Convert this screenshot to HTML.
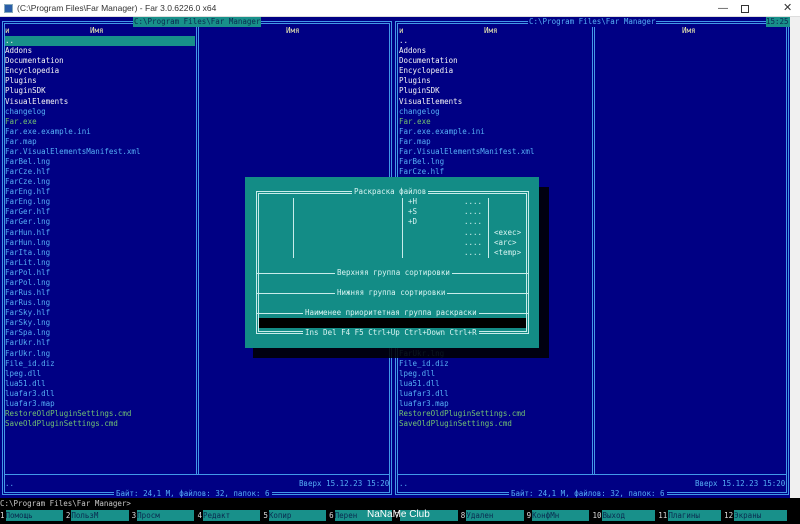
<!DOCTYPE html>
<html><head><meta charset="utf-8"><style>
*{margin:0;padding:0;box-sizing:border-box}
body{width:800px;height:524px;overflow:hidden;background:#000084;position:relative;font-family:"DejaVu Sans Mono","Liberation Mono",monospace;font-size:7.5px;}
.t{position:absolute;white-space:pre;line-height:10px;height:10px}
#tb{position:absolute;left:0;top:0;width:800px;height:17px;background:#fff;font-family:"Liberation Sans",sans-serif;font-size:8.5px;color:#333;line-height:17px;border-bottom:1px solid #ddd}
.w{color:#f4f4f4}.b{color:#55aef5}.g{color:#72c272}.h{color:#ecec b0;color:#ececb0}
</style></head><body>
<div id="tb"><span style="position:absolute;left:4px;top:4px;width:9px;height:9px;background:#2a5ea8;border:1px solid #8ab"></span><span style="position:absolute;left:17px">(C:\Program Files\Far Manager) - Far 3.0.6226.0 x64</span>
<span style="position:absolute;left:718px;font-size:10px">—</span><span style="position:absolute;left:741px;top:5px;width:8px;height:8px;border:1px solid #333"></span><span style="position:absolute;left:783px;font-size:11px">✕</span></div>

<svg width="800" height="524" style="position:absolute;left:0;top:0" shape-rendering="crispEdges">
<g stroke="#4298e8" stroke-width="1" fill="none">
<rect x="2.5" y="21.5" width="389" height="473"/><rect x="4.5" y="23.5" width="385" height="469"/>
<line x1="196.5" y1="24" x2="196.5" y2="474"/><line x1="198.5" y1="24" x2="198.5" y2="474"/>
<line x1="5" y1="474.5" x2="389" y2="474.5"/>
<rect x="395.5" y="21.5" width="393" height="473"/><rect x="397.5" y="23.5" width="389" height="469"/>
<line x1="592.5" y1="24" x2="592.5" y2="474"/><line x1="594.5" y1="24" x2="594.5" y2="474"/>
<line x1="398" y1="474.5" x2="786" y2="474.5"/>
</g>
<rect x="790" y="17" width="10" height="490" fill="#f0f0f0"/>
</svg>

<div class="t" style="left:133px;top:17px;background:#18908a;color:#0a2a50;padding:0 1px">C:\Program Files\Far Manager</div>
<div class="t b" style="left:528px;top:17px;background:#000084;padding:0 1px">C:\Program Files\Far Manager</div>
<div class="t" style="left:766px;top:17px;background:#18908a;color:#0a2a50;width:24px">15:25</div>

<div class="t h" style="left:5px;top:26px">и</div><div class="t h" style="left:90px;top:26px">Имя</div><div class="t h" style="left:286px;top:26px">Имя</div>
<div class="t h" style="left:399px;top:26px">и</div><div class="t h" style="left:484px;top:26px">Имя</div><div class="t h" style="left:682px;top:26px">Имя</div>
<div style="position:absolute;left:5px;top:36px;width:190px;height:10px;background:#18908a"></div>
<div id="files"></div>

<div class="t b" style="left:5px;top:479px">..</div><div class="t b" style="left:299px;top:479px">Вверх 15.12.23 15:20</div>
<div class="t b" style="left:399px;top:479px">..</div><div class="t b" style="left:695px;top:479px">Вверх 15.12.23 15:20</div>
<div class="t b" style="left:114px;top:489px;background:#000084;padding:0 2px">Байт: 24,1 М, файлов: 32, папок: 6</div>
<div class="t b" style="left:509px;top:489px;background:#000084;padding:0 2px">Байт: 24,1 М, файлов: 32, папок: 6</div>

<div style="position:absolute;left:0;top:498px;width:800px;height:26px;background:#000"></div>
<div class="t" style="left:0;top:499px;color:#c8c8c8">C:\Program Files\Far Manager&gt;</div>
<div id="keys" style="position:absolute;left:0;top:510px;width:790px;height:11px;display:flex"></div>
<div class="t" style="left:367px;top:509px;color:#fff;font-family:'Liberation Sans',sans-serif;font-size:10px;line-height:12px;height:12px">NaNaMe Club</div>

<div style="position:absolute;left:253px;top:187px;width:296px;height:171px;background:rgba(0,0,0,0.88)"></div>
<div style="position:absolute;left:245px;top:177px;width:294px;height:171px;background:#138c86"></div>
<svg width="800" height="524" style="position:absolute;left:0;top:0" shape-rendering="crispEdges">
<g stroke="#c8ecea" fill="none">
<rect x="256.5" y="191.5" width="272" height="142"/><rect x="258.5" y="193.5" width="268" height="138"/>
<line x1="293.5" y1="198" x2="293.5" y2="258"/><line x1="402.5" y1="198" x2="402.5" y2="258"/><line x1="488.5" y1="198" x2="488.5" y2="258"/>
<line x1="257" y1="273.5" x2="528" y2="273.5"/><line x1="257" y1="293.5" x2="528" y2="293.5"/><line x1="257" y1="313.5" x2="528" y2="313.5"/>
</g>
<rect x="259" y="318" width="267" height="10" fill="#000"/>
</svg>
<div id="dlg"></div>

<script>
var L=[["..","w"],["Addons","w"],["Documentation","w"],["Encyclopedia","w"],["Plugins","w"],["PluginSDK","w"],["VisualElements","w"],["changelog","b"],["Far.exe","g"],["Far.exe.example.ini","b"],["Far.map","b"],["Far.VisualElementsManifest.xml","b"],["FarBel.lng","b"],["FarCze.hlf","b"],["FarCze.lng","b"],["FarEng.hlf","b"],["FarEng.lng","b"],["FarGer.hlf","b"],["FarGer.lng","b"],["FarHun.hlf","b"],["FarHun.lng","b"],["FarIta.lng","b"],["FarLit.lng","b"],["FarPol.hlf","b"],["FarPol.lng","b"],["FarRus.hlf","b"],["FarRus.lng","b"],["FarSky.hlf","b"],["FarSky.lng","b"],["FarSpa.lng","b"],["FarUkr.hlf","b"],["FarUkr.lng","b"],["File_id.diz","b"],["lpeg.dll","b"],["lua51.dll","b"],["luafar3.dll","b"],["luafar3.map","b"],["RestoreOldPluginSettings.cmd","g"],["SaveOldPluginSettings.cmd","g"]];
var h="";
L.forEach(function(f,i){var y=(36+i*10.08).toFixed(1);
h+='<div class="t '+(i==0?'w':f[1])+'" style="left:5px;top:'+y+'px">'+f[0]+'</div>';
h+='<div class="t '+f[1]+'" style="left:399px;top:'+y+'px">'+f[0]+'</div>';});
document.getElementById("files").innerHTML=h;
var K=["Помощь","ПользМ","Просм","Редакт","Копир","Перен","","Удален","КонфМн","Выход","Плагины","Экраны"],k="";
K.forEach(function(n,i){k+='<div style="flex:1;display:flex;height:11px;line-height:11px"><span style="color:#ddd;padding-right:1px">'+(i+1)+'</span><span style="flex:1;background:#18908a;color:#0a2a50;margin-right:3px">'+n+'</span></div>';});
document.getElementById("keys").innerHTML=k;
var D=[[352,187,"Раскраска файлов",1],[408,197,"+H"],[408,207,"+S"],[408,217,"+D"],[464,197,"...."],[464,207,"...."],[464,217,"...."],[464,228,"...."],[464,238,"...."],[464,248,"...."],[494,228,"&lt;exec&gt;"],[494,238,"&lt;arc&gt;"],[494,248,"&lt;temp&gt;"],[335,268,"Верхняя группа сортировки",1],[335,288,"Нижняя группа сортировки",1],[303,308,"Наименее приоритетная группа раскраски",1],[303,328,"Ins Del F4 F5 Ctrl+Up Ctrl+Down Ctrl+R",1]],d="";
D.forEach(function(a){d+='<div class="t" style="left:'+a[0]+'px;top:'+a[1]+'px;color:#d8f4f2;'+(a[3]?'background:#138c86;padding:0 2px':'')+'">'+a[2]+'</div>';});
document.getElementById("dlg").innerHTML=d;
</script>
</body></html>
